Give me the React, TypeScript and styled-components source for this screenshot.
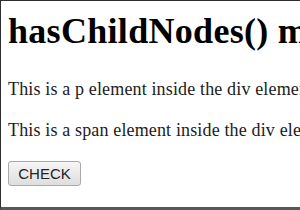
import React from "react";
import styled, { createGlobalStyle } from "styled-components";

const Global = createGlobalStyle`
  html, body { margin: 0; padding: 0; background: #ffffff; }
  body { width: 300px; height: 210px; overflow: hidden; }
`;

const Frame = styled.div`
  box-sizing: border-box;
  width: 300px;
  height: 210px;
  border-top: 1px solid #2e2e2e;
  border-left: 1px solid #2e2e2e;
  border-bottom: 3px solid #585858;
  padding: 10px 0 0 7px;
  display: flex;
  flex-direction: column;
  align-items: flex-start;
  overflow: hidden;
  font-family: "Liberation Serif", "Times New Roman", serif;
  color: #111;
`;

const Heading = styled.h1`
  margin: 0;
  font-size: 36px;
  line-height: 40px;
  font-weight: bold;
  letter-spacing: 0.3px;
  white-space: nowrap;
  color: #000;
`;

const Para = styled.p<{ $gap: number }>`
  margin: ${(p) => p.$gap}px 0 0;
  font-size: 18px;
  line-height: 20px;
  letter-spacing: 0.15px;
  white-space: nowrap;
  color: #1c1c1c;
`;

const Button = styled.button`
  margin-top: 21px;
  box-sizing: border-box;
  width: 73px;
  height: 25px;
  padding: 0;
  border: 1px solid #a9a9a9;
  border-radius: 3px;
  background: linear-gradient(#f6f6f6, #dedede);
  font-family: "Liberation Sans", Arial, sans-serif;
  font-size: 15px;
  color: #222;
  cursor: pointer;
`;

export default function App() {
  return (
    <>
      <Global />
      <Frame>
        <Heading>hasChildNodes() method</Heading>
        <Para $gap={28}>This is a p element inside the div element.</Para>
        <Para $gap={21}>This is a span element inside the div element.</Para>
        <Button>CHECK</Button>
      </Frame>
    </>
  );
}
